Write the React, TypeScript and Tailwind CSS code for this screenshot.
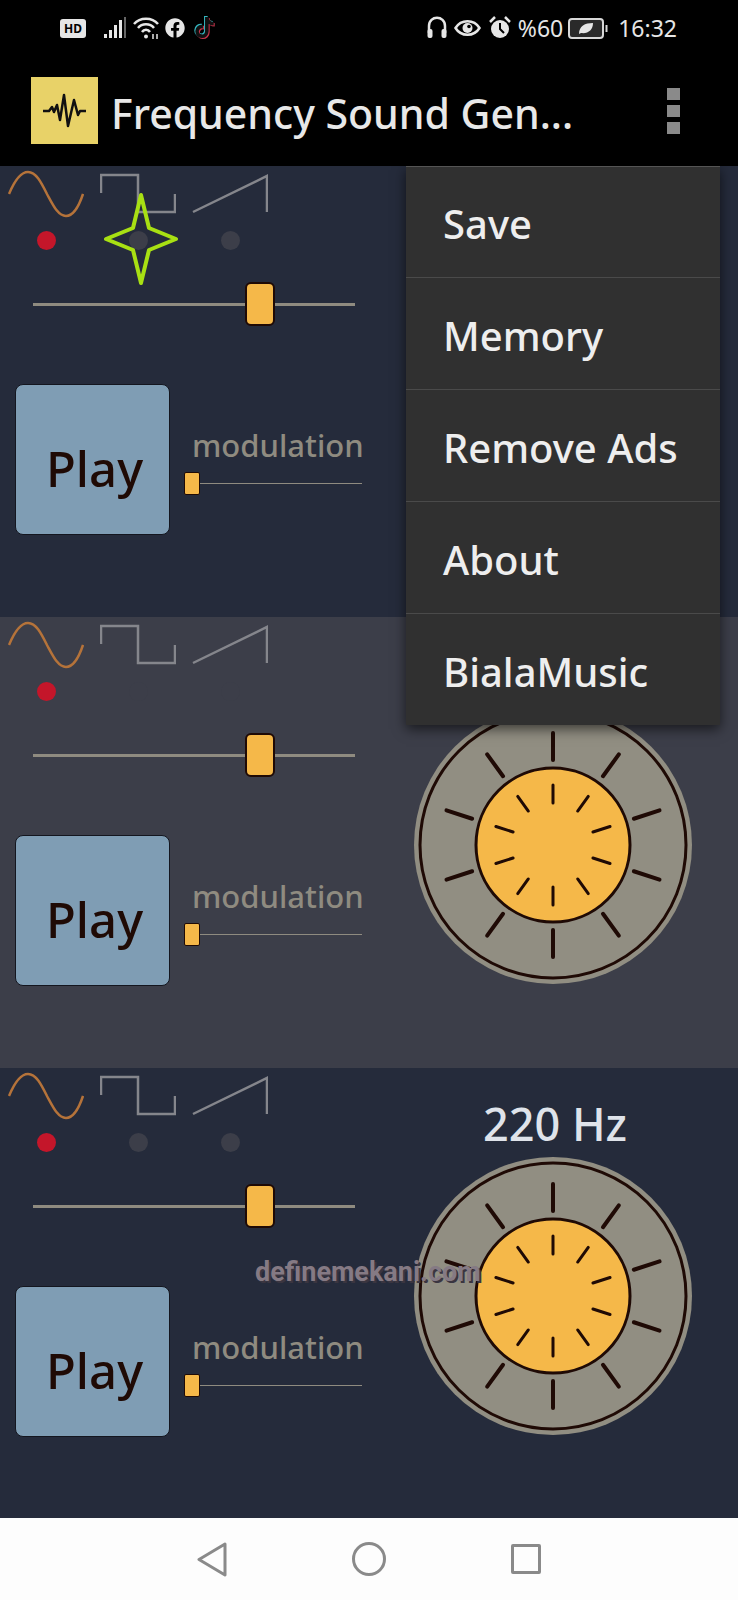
import { FaFacebook, FaTiktok } from "react-icons/fa";

const menuItems = ["Save", "Memory", "Remove Ads", "About", "BialaMusic"];
const tickAngles = [0, 36, 72, 108, 144, 180, 216, 252, 288, 324];

function Knob() {
  return (
    <svg width="278" height="278" viewBox="-139 -139 278 278">
      <circle r="139" fill="#918e82" />
      <circle r="133" fill="none" stroke="#1f0a05" strokeWidth="3" />
      <circle r="77" fill="#f5b849" stroke="#1f0a05" strokeWidth="3" />
      {tickAngles.map((a) => (
        <g key={a} transform={`rotate(${a})`} stroke="#1f0a05" strokeLinecap="round">
          <line y1="-112" y2="-85" strokeWidth="4" />
          <line y1="-60" y2="-42" strokeWidth="3" />
        </g>
      ))}
    </svg>
  );
}

function Waves() {
  return (
    <div className="flex gap-4 pl-2">
      <svg width="76" height="48" viewBox="0 0 76 48" fill="none" stroke="#b5733a" strokeWidth="2.5">
        <path d="M1 24 C6 12 12 2 20 2 C28 2 33 12 39 24 C45 35 50 46 58 46 C66 46 71 36 75 24" />
      </svg>
      <svg width="76" height="48" viewBox="0 0 76 48" fill="none" stroke="#85868c" strokeWidth="2.5">
        <path d="M1 23 V5 H38 V42 H75 V24" />
      </svg>
      <svg width="76" height="48" viewBox="0 0 76 48" fill="none" stroke="#85868c" strokeWidth="2.5">
        <path d="M1 42 L75 6 V42" />
      </svg>
    </div>
  );
}

function Panel({ bg, knob, hz, grow }: { bg: string; knob?: boolean; hz?: boolean; grow?: boolean }) {
  return (
    <div className={`flex ${bg} ${grow ? "flex-1" : "h-[451px]"}`}>
      <div className="w-[414px] pt-1">
        <Waves />
        <div className="flex gap-4 pl-2 mt-[13px]">
          <div className="w-[76px] flex justify-center">
            <div className="w-[19px] h-[19px] rounded-full bg-[#c4162a]" />
          </div>
          <div className="w-[76px] flex justify-center">
            <div className="w-[19px] h-[19px] rounded-full bg-[#3c3e49]" />
          </div>
          <div className="w-[76px] flex justify-center">
            <div className="w-[19px] h-[19px] rounded-full bg-[#3c3e49]" />
          </div>
        </div>
        <div className="flex items-center ml-[33px] w-[322px] mt-8">
          <div className="flex-1 h-[3px] bg-[#8f8b80]" />
          <div className="w-[30px] h-[44px] rounded-md bg-[#f5b849] border-[2.5px] border-[#1f0a05]" />
          <div className="w-[80px] h-[3px] bg-[#8f8b80]" />
        </div>
        <div className="flex ml-[15px] mt-[58px]">
          <div className="w-[155px] h-[151px] rounded-lg bg-[#7f9db4] border border-[#14161f] flex items-center justify-center pl-1 pt-[18px] text-[49px] font-medium leading-none text-[#1f0a05]">
            Play
          </div>
          <div className="ml-[14px] pt-[41px]">
            <div className="ml-2 h-10 leading-10 text-[31px] font-medium text-[#8f8b80]">modulation</div>
            <div className="flex items-center mt-[7px]">
              <div className="w-4 h-[23px] rounded-[2px] bg-[#f5b849] border border-[#1f0a05]" />
              <div className="w-[162px] h-px bg-[#8f8b80]" />
            </div>
          </div>
        </div>
      </div>
      {knob && (
        <div className="w-[278px] flex flex-col items-center">
          <div className="mt-[26px] ml-1 h-[60px] leading-[60px] text-[45px] font-medium text-[#dfe3ea]">{hz ? "220 Hz" : ""}</div>
          <div className="mt-[3px]">
            <Knob />
          </div>
        </div>
      )}
    </div>
  );
}

function StatusBar() {
  return (
    <div className="h-14 flex items-center justify-between pl-[60px] pr-[61px] text-[#e6e6e6]">
      <div className="flex items-center">
        <div className="w-[26px] h-[19px] rounded-[3px] bg-[#e6e6e6] text-black text-[12px] leading-[19px] font-bold text-center">
          HD
        </div>
        <svg className="ml-[18px]" width="22" height="22" viewBox="0 0 22 22" fill="#e6e6e6">
          <rect x="0" y="17" width="3" height="4" />
          <rect x="5" y="13" width="3" height="8" />
          <rect x="10" y="8" width="3" height="13" />
          <rect x="15" y="3" width="3" height="18" />
          <rect x="20" y="0" width="2" height="21" fill="#666" />
        </svg>
        <svg className="ml-[7px]" width="27" height="24" viewBox="0 0 27 24" fill="none" stroke="#e6e6e6" strokeWidth="2.5">
          <path d="M1 8 C7 1 19 1 25 8" />
          <path d="M5 12 C9 7 17 7 21 12" />
          <path d="M9 16 C11 13 15 13 17 16" />
          <circle cx="13" cy="20.5" r="2" fill="#e6e6e6" stroke="none" />
          <path d="M20 23 V18 M24 18 V23" strokeWidth="1.5" />
        </svg>
        <FaFacebook className="ml-[5px] text-[#e6e6e6]" size={20} />
        <div className="relative ml-2 w-[22px] h-[24px]">
          <FaTiktok className="absolute left-0 top-0 text-[#35b6bf]" size={21} />
          <FaTiktok className="absolute left-[2px] top-[2px] text-[#c7354c]" size={21} />
          <FaTiktok className="absolute left-[1px] top-[1px] text-[#111]" size={21} />
        </div>
      </div>
      <div className="flex items-center">
        <svg width="20" height="24" viewBox="0 0 20 24" fill="none" stroke="#e6e6e6" strokeWidth="2.5">
          <path d="M2 17 V10 C2 -1 18 -1 18 10 V17" />
          <rect x="0.5" y="13" width="5" height="9" rx="2" fill="#e6e6e6" stroke="none" />
          <rect x="14.5" y="13" width="5" height="9" rx="2" fill="#e6e6e6" stroke="none" />
        </svg>
        <svg className="ml-[7px]" width="27" height="20" viewBox="0 0 27 20" fill="none" stroke="#e6e6e6" strokeWidth="2.5">
          <path d="M1.5 10 C7 1 20 1 25.5 10 C20 19 7 19 1.5 10 Z" />
          <circle cx="13.5" cy="10" r="5" fill="#e6e6e6" stroke="none" />
          <circle cx="15" cy="8.5" r="1.8" fill="#000" stroke="none" />
        </svg>
        <svg className="ml-2" width="22" height="24" viewBox="0 0 22 24" fill="none">
          <circle cx="11" cy="13" r="9" fill="#e6e6e6" />
          <path d="M11 7 V13 L15 17" stroke="#000" strokeWidth="2" />
          <path d="M1 6 L6 1 M21 6 L16 1" stroke="#e6e6e6" strokeWidth="2.5" />
        </svg>
        <span className="ml-[7px] text-[23px] leading-none">%60</span>
        <svg className="ml-[5px]" width="40" height="24" viewBox="0 0 40 24" fill="none">
          <rect x="1" y="3" width="34" height="19" rx="3" stroke="#d8d8d8" strokeWidth="2" fill="#2a2a2a" />
          <path d="M11 18 C11 10 17 7 25 7 C25 14 20 18 13 17 Z" fill="#e6e6e6" />
          <rect x="37.5" y="9" width="2" height="7" fill="#d8d8d8" />
        </svg>
        <span className="ml-[10px] text-[23px] leading-none">16:32</span>
      </div>
    </div>
  );
}

function AppBar() {
  return (
    <div className="h-[110px] flex items-center pl-[31px] pr-[58px]">
      <div className="w-[67px] h-[67px] mb-[2px] bg-[#e8d268] flex items-center justify-center">
        <svg width="67" height="67" viewBox="0 0 67 67" fill="none" stroke="#111" strokeWidth="2.5" strokeLinejoin="round">
          <path d="M12 34 H18 L21 30 L23 35 L26 28 L29 43 L33 18 L37 49 L43 23 L47 38 L49 34 H55" />
        </svg>
      </div>
      <div className="ml-[13px] pt-1 flex-1 text-[41px] font-medium leading-none text-[#e8e8e8] whitespace-nowrap">
        Frequency Sound Gen...
      </div>
      <div className="flex flex-col gap-[5px]">
        <div className="w-[13px] h-3 bg-[#8a8a8a]" />
        <div className="w-[13px] h-3 bg-[#8a8a8a]" />
        <div className="w-[13px] h-3 bg-[#8a8a8a]" />
      </div>
    </div>
  );
}

function NavBar() {
  return (
    <div className="h-[82px] bg-[#fdfdfd] flex items-center pl-[197px]">
      <svg width="30" height="35" viewBox="0 0 30 35" fill="none" stroke="#8a8a8a" strokeWidth="3" strokeLinejoin="round">
        <path d="M28 2 L2 17.5 L28 33 Z" />
      </svg>
      <div className="ml-[125px] w-[34px] h-[34px] rounded-full border-[3px] border-[#8a8a8a]" />
      <div className="ml-[125px] w-[30px] h-[30px] rounded-[2px] border-[3px] border-[#8a8a8a]" />
    </div>
  );
}

export default function App() {
  return (
    <div className="relative w-[738px] h-[1600px] overflow-hidden flex flex-col bg-black font-['Noto_Sans',sans-serif]">
      <StatusBar />
      <AppBar />
      <Panel bg="bg-[#252b3b]" />
      <Panel bg="bg-[#3c3e49]" knob />
      <Panel bg="bg-[#252b3b]" knob hz grow />
      <NavBar />

      <div className="absolute left-[406px] top-[166px] w-[314px] bg-[#303030] border-t border-[#555] shadow-[0_4px_12px_rgba(0,0,0,0.6)]">
        {menuItems.map((item, i) => (
          <div
            key={item}
            className={`flex items-center pl-[37px] pt-1 text-[40px] font-medium text-[#eeeeee] ${i > 0 ? "h-[112px] border-t border-[#4a4a4a]" : "h-[110px]"}`}
          >
            {item}
          </div>
        ))}
      </div>

      <svg className="absolute left-[100px] top-[190px]" width="82" height="98" viewBox="0 0 82 98" fill="none" stroke="#a8e013" strokeWidth="4" strokeLinejoin="round">
        <path d="M41 5 L49 38 L76 49 L49 60 L41 93 L33 60 L6 49 L33 38 Z" />
      </svg>

      <div className="absolute left-[255px] top-[1256px] text-[27px] leading-8 font-bold text-[#857a84] [text-shadow:2px_2px_0_#3a3540] font-['Roboto',sans-serif]">
        definemekani.com
      </div>
    </div>
  );
}
